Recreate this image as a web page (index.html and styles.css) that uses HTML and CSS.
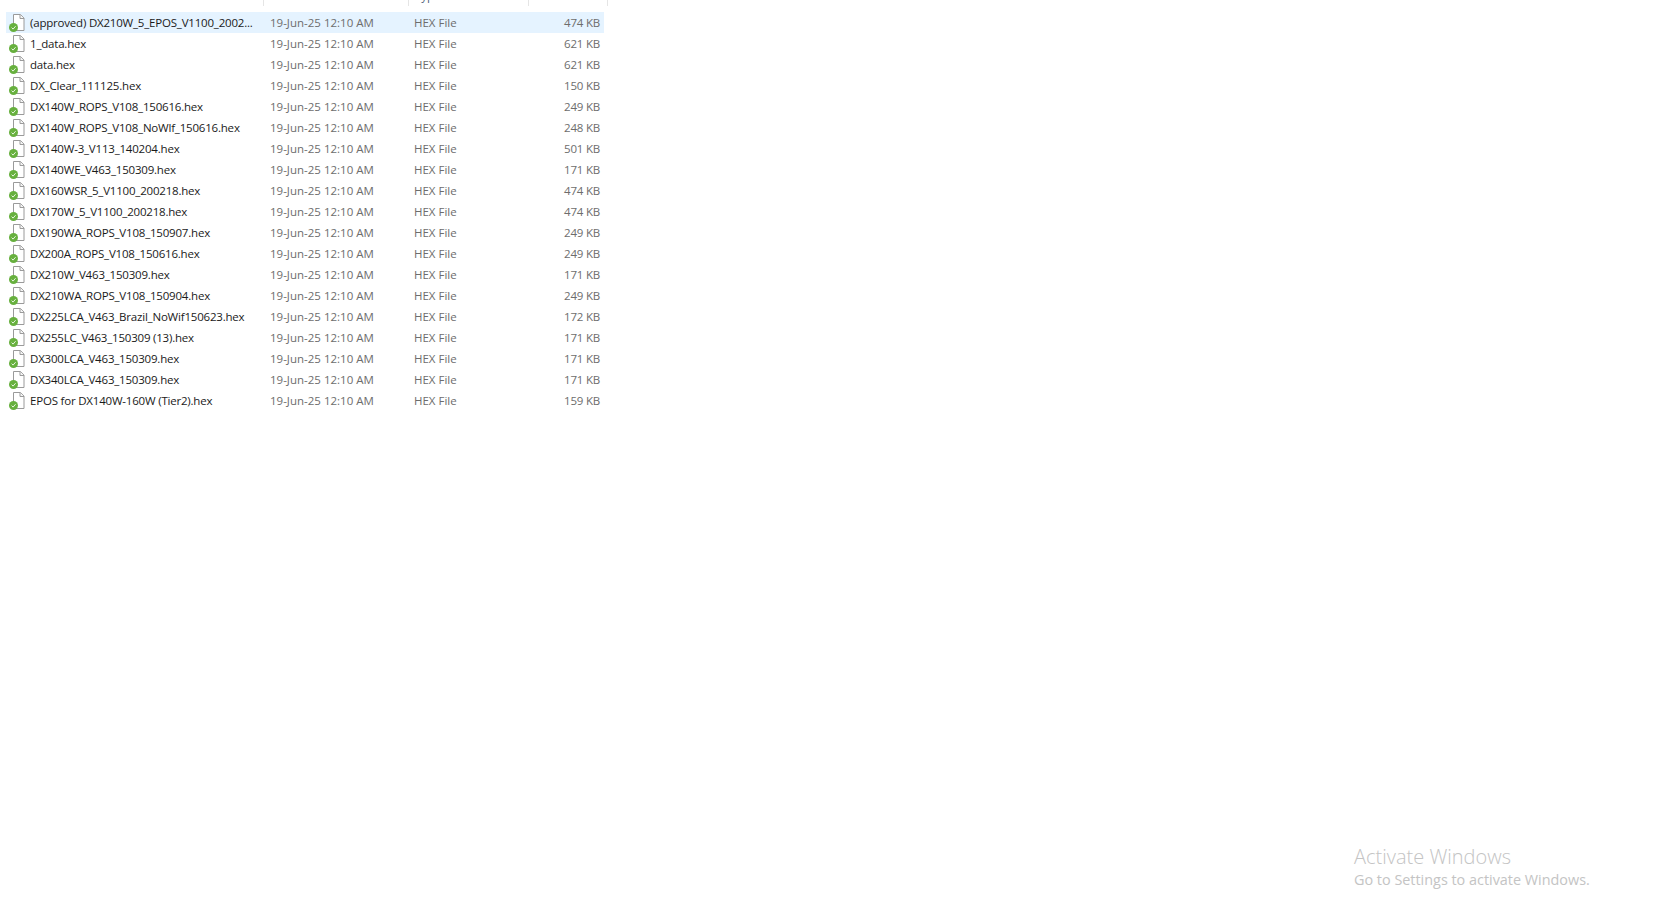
FILE: index.html
```html
<!DOCTYPE html>
<html lang="en">
<head>
    <meta charset="UTF-8">
    <title>Firmware files</title>
    <link rel="stylesheet" href="styles.css">
</head>
<body>
    <svg class="defs" width="0" height="0">
        <symbol id="hex-icon" viewBox="0 0 18 18">
            <path d="M5.5 .5H12.5L16 4V16.5H5.5Z" fill="#fff" stroke="#9a9a9a"/>
            <path d="M12 .5V4.5H16" fill="#f4f4f4" stroke="#9a9a9a"/>
            <circle cx="5.5" cy="13.5" r="4.5" fill="#67b03e"/>
            <path d="M3.6 13.6L5.1 15.1L7.6 12.2" fill="none" stroke="#e8f5e0" stroke-width="1"/>
        </symbol>
    </svg>
    <main class="explorer">
        <div class="header">
            <div class="header-cell name-col"></div>
            <div class="header-cell date-col"></div>
            <div class="header-cell type-col">Type</div>
            <div class="header-cell size-col"></div>
        </div>
        <div class="file-list">
            <div class="file selected">
                <svg class="icon"><use href="#hex-icon"/></svg>
                <span class="name">(approved) DX210W_5_EPOS_V1100_2002...</span>
                <span class="date">19-Jun-25 12:10 AM</span>
                <span class="type">HEX File</span>
                <span class="size">474 KB</span>
            </div>
            <div class="file">
                <svg class="icon"><use href="#hex-icon"/></svg>
                <span class="name">1_data.hex</span>
                <span class="date">19-Jun-25 12:10 AM</span>
                <span class="type">HEX File</span>
                <span class="size">621 KB</span>
            </div>
            <div class="file">
                <svg class="icon"><use href="#hex-icon"/></svg>
                <span class="name">data.hex</span>
                <span class="date">19-Jun-25 12:10 AM</span>
                <span class="type">HEX File</span>
                <span class="size">621 KB</span>
            </div>
            <div class="file">
                <svg class="icon"><use href="#hex-icon"/></svg>
                <span class="name">DX_Clear_111125.hex</span>
                <span class="date">19-Jun-25 12:10 AM</span>
                <span class="type">HEX File</span>
                <span class="size">150 KB</span>
            </div>
            <div class="file">
                <svg class="icon"><use href="#hex-icon"/></svg>
                <span class="name">DX140W_ROPS_V108_150616.hex</span>
                <span class="date">19-Jun-25 12:10 AM</span>
                <span class="type">HEX File</span>
                <span class="size">249 KB</span>
            </div>
            <div class="file">
                <svg class="icon"><use href="#hex-icon"/></svg>
                <span class="name">DX140W_ROPS_V108_NoWlf_150616.hex</span>
                <span class="date">19-Jun-25 12:10 AM</span>
                <span class="type">HEX File</span>
                <span class="size">248 KB</span>
            </div>
            <div class="file">
                <svg class="icon"><use href="#hex-icon"/></svg>
                <span class="name">DX140W-3_V113_140204.hex</span>
                <span class="date">19-Jun-25 12:10 AM</span>
                <span class="type">HEX File</span>
                <span class="size">501 KB</span>
            </div>
            <div class="file">
                <svg class="icon"><use href="#hex-icon"/></svg>
                <span class="name">DX140WE_V463_150309.hex</span>
                <span class="date">19-Jun-25 12:10 AM</span>
                <span class="type">HEX File</span>
                <span class="size">171 KB</span>
            </div>
            <div class="file">
                <svg class="icon"><use href="#hex-icon"/></svg>
                <span class="name">DX160WSR_5_V1100_200218.hex</span>
                <span class="date">19-Jun-25 12:10 AM</span>
                <span class="type">HEX File</span>
                <span class="size">474 KB</span>
            </div>
            <div class="file">
                <svg class="icon"><use href="#hex-icon"/></svg>
                <span class="name">DX170W_5_V1100_200218.hex</span>
                <span class="date">19-Jun-25 12:10 AM</span>
                <span class="type">HEX File</span>
                <span class="size">474 KB</span>
            </div>
            <div class="file">
                <svg class="icon"><use href="#hex-icon"/></svg>
                <span class="name">DX190WA_ROPS_V108_150907.hex</span>
                <span class="date">19-Jun-25 12:10 AM</span>
                <span class="type">HEX File</span>
                <span class="size">249 KB</span>
            </div>
            <div class="file">
                <svg class="icon"><use href="#hex-icon"/></svg>
                <span class="name">DX200A_ROPS_V108_150616.hex</span>
                <span class="date">19-Jun-25 12:10 AM</span>
                <span class="type">HEX File</span>
                <span class="size">249 KB</span>
            </div>
            <div class="file">
                <svg class="icon"><use href="#hex-icon"/></svg>
                <span class="name">DX210W_V463_150309.hex</span>
                <span class="date">19-Jun-25 12:10 AM</span>
                <span class="type">HEX File</span>
                <span class="size">171 KB</span>
            </div>
            <div class="file">
                <svg class="icon"><use href="#hex-icon"/></svg>
                <span class="name">DX210WA_ROPS_V108_150904.hex</span>
                <span class="date">19-Jun-25 12:10 AM</span>
                <span class="type">HEX File</span>
                <span class="size">249 KB</span>
            </div>
            <div class="file">
                <svg class="icon"><use href="#hex-icon"/></svg>
                <span class="name">DX225LCA_V463_Brazil_NoWif150623.hex</span>
                <span class="date">19-Jun-25 12:10 AM</span>
                <span class="type">HEX File</span>
                <span class="size">172 KB</span>
            </div>
            <div class="file">
                <svg class="icon"><use href="#hex-icon"/></svg>
                <span class="name">DX255LC_V463_150309 (13).hex</span>
                <span class="date">19-Jun-25 12:10 AM</span>
                <span class="type">HEX File</span>
                <span class="size">171 KB</span>
            </div>
            <div class="file">
                <svg class="icon"><use href="#hex-icon"/></svg>
                <span class="name">DX300LCA_V463_150309.hex</span>
                <span class="date">19-Jun-25 12:10 AM</span>
                <span class="type">HEX File</span>
                <span class="size">171 KB</span>
            </div>
            <div class="file">
                <svg class="icon"><use href="#hex-icon"/></svg>
                <span class="name">DX340LCA_V463_150309.hex</span>
                <span class="date">19-Jun-25 12:10 AM</span>
                <span class="type">HEX File</span>
                <span class="size">171 KB</span>
            </div>
            <div class="file">
                <svg class="icon"><use href="#hex-icon"/></svg>
                <span class="name">EPOS for DX140W-160W (Tier2).hex</span>
                <span class="date">19-Jun-25 12:10 AM</span>
                <span class="type">HEX File</span>
                <span class="size">159 KB</span>
            </div>
        </div>
    </main>
    <aside class="watermark">
        <div class="watermark-title">Activate Windows</div>
        <div class="watermark-text">Go to Settings to activate Windows.</div>
    </aside>
</body>
</html>
```

FILE: styles.css
```css
html, body {
    height: 100%;
}

body {
    margin: 0;
    background: #fff;
    font-family: "Open Sans", "Noto Sans", sans-serif;
    font-size: 11.5px;
    overflow: hidden;
}

.defs {
    position: absolute;
}

.explorer {
    width: 608px;
}

.header {
    display: flex;
    height: 6px;
    overflow: hidden;
}

.header-cell {
    border-right: 1px solid #e5e5e5;
    box-sizing: border-box;
}

.name-col {
    width: 264px;
}

.date-col {
    width: 145px;
}

.type-col {
    width: 120px;
    padding-left: 6px;
    line-height: 10px;
    margin-top: -9px;
    height: 15px;
    color: #4c607a;
}

.size-col {
    width: 79px;
}

.file-list {
    padding-top: 6px;
    width: 598px;
    margin-left: 6px;
}

.file {
    display: grid;
    grid-template-columns: 18px 240px 144px 100px 96px;
    align-items: center;
    height: 21px;
    line-height: 21px;
    color: #6d6d6d;
}

.selected {
    background: #e5f3ff;
}

.icon {
    width: 18px;
    height: 18px;
    margin-left: 2px;
}

.name {
    color: #1a1a1a;
    padding-left: 6px;
    white-space: nowrap;
    letter-spacing: -0.2px;
}

.date,
.type {
    padding-left: 6px;
}

.size {
    text-align: right;
    padding-right: 4px;
    letter-spacing: -0.2px;
}

.watermark {
    position: absolute;
    left: 1354px;
    top: 845px;
    color: #c4c4c4;
}

.watermark-title {
    font-size: 20px;
    font-weight: 300;
    line-height: 24px;
}

.watermark-text {
    font-size: 14.4px;
    line-height: 22px;
}
```
